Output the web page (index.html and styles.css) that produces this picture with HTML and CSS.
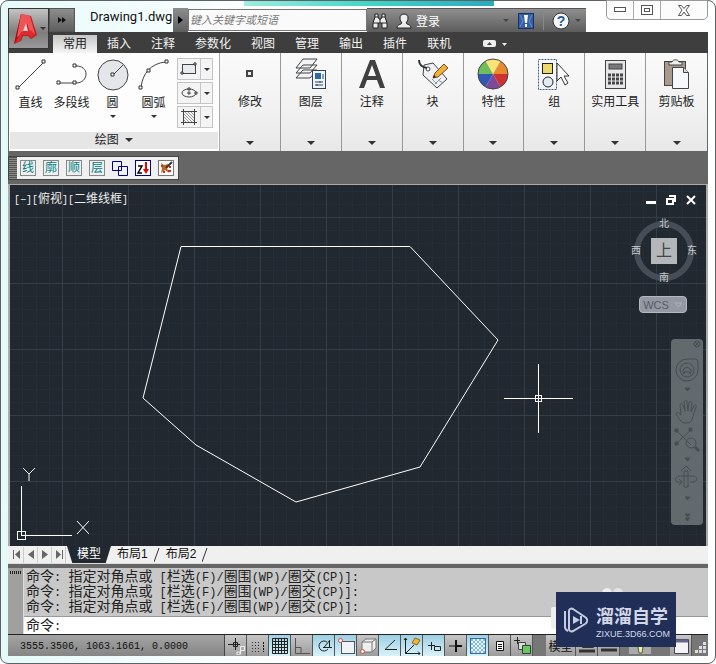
FILE: index.html
```html
<!DOCTYPE html>
<html lang="zh-CN">
<head>
    <meta charset="UTF-8">
    <meta name="viewport" content="width=device-width, initial-scale=1.0">
    <title>Drawing1.dwg</title>
    <link rel="stylesheet" href="styles.css">
</head>
<body>
    <div class="window">
        <!-- Title bar -->
        <header class="title-bar">
            <button class="quick-access" aria-label="快速访问"><svg width="8" height="6"><path d="M0 0l4 3-4 3zM4 0l4 3-4 3z" fill="#111"/></svg></button>
            <h1 class="title">Drawing1.dwg</h1>
            <button class="search-toggle" aria-label="搜索"><svg width="5" height="8"><path d="M0 0l5 4-5 4z" fill="#000"/></svg></button>
            <input class="search" type="text" placeholder="键入关键字或短语" aria-label="键入关键字或短语">
            <div class="info-bar">
                <button class="info-button" aria-label="查找">
                    <svg width="16" height="16" viewBox="0 0 16 16"><path d="M3 1h3v3l1 2h2l1-2V1h3v3l2 6v5h-5v-5H6v5H1v-5l2-6z" fill="#eee" stroke="#222"/><path d="M3 4h3M10 4h3M1 10h5M10 10h5M8 6v4" stroke="#222"/></svg>
                </button>
                <button class="info-button login">
                    <svg width="16" height="16" viewBox="0 0 16 16"><path d="M8 1c3 0 4 2 4 4s-1 4-2 5c1 2 5 1 5 5H1c0-4 4-3 5-5-1-1-2-3-2-5s1-4 4-4z" fill="#eee" stroke="#222"/></svg>
                    登录
                </button>
                <span class="caret caret-dim push"></span>
                <button class="info-button exchange" aria-label="Exchange">
                    <svg width="16" height="16" viewBox="0 0 16 16"><rect x=".5" y=".5" width="15" height="15" fill="#3560a8" stroke="#15306a"/><path d="M2 2l3 6-3 6M14 2l-3 6 3 6" fill="none" stroke="#6a90cc"/><path d="M6 2h4l-1 8H7zM7 11h2v3H7z" fill="#fff"/></svg>
                </button>
                <button class="info-button help" aria-label="帮助">
                    <svg width="18" height="18" viewBox="0 0 18 18"><circle cx="9" cy="9" r="8" fill="#f4f6fa" stroke="#333"/><text x="9" y="14" text-anchor="middle" class="help-mark">?</text></svg>
                </button>
                <span class="caret caret-dim"></span>
            </div>
            <div class="window-controls">
                <button aria-label="最小化"><svg width="12" height="6"><rect x=".5" y=".5" width="11" height="4" fill="#fff" stroke="#555"/></svg></button>
                <button aria-label="还原"><svg width="12" height="11"><rect x=".5" y=".5" width="11" height="9" fill="#fff" stroke="#555"/><rect x="3.500" y="3.500" width="5" height="3" fill="#fff" stroke="#555"/></svg></button>
                <button class="wide" aria-label="关闭"><svg width="12" height="11"><path d="M.5 .5h3l2.500 3 2.500-3h3L8 5l3.500 5.500h-3L6 7l-2.500 3.500h-3L4 5z" fill="#fff" stroke="#555"/></svg></button>
            </div>
            <button class="app-button" aria-label="应用程序菜单">
                <svg width="26" height="34" viewBox="0 0 26 34">
                    <path d="M8 2L18 4 24 23 18 27 15 24H10L8 29 1 32z" fill="#c91c20"/>
                    <path d="M8 2L7 20 1 32z" fill="#9c1418"/>
                    <path d="M8 2l9 2 5 18-4 2-4-13-5 11-5 3z" fill="#ee5456"/>
                    <path d="M8 20l9-2 5 4-4 4-2-3H9l-2 6-4 2z" fill="#dc2b2e"/>
                    <path d="M13 11l2 8h-5z" fill="#f4cfcf"/>
                </svg>
                <span class="caret"></span>
            </button>
        </header>

        <!-- Ribbon tabs -->
        <nav class="tabs">
            <button class="tab active">常用</button>
            <button class="tab">插入</button>
            <button class="tab">注释</button>
            <button class="tab">参数化</button>
            <button class="tab">视图</button>
            <button class="tab">管理</button>
            <button class="tab">输出</button>
            <button class="tab">插件</button>
            <button class="tab">联机</button>
            <button class="ribbon-toggle" aria-label="最小化功能区">
                <svg width="24" height="8"><rect width="13" height="7" rx="2" fill="#eee"/><path d="M4 5l2.500-3L9 5z" fill="#444"/><path d="M19 3h5l-2.500 3z" fill="#eee"/></svg>
            </button>
        </nav>

        <!-- Ribbon -->
        <section class="ribbon">
            <div class="draw-panel">
                <div class="draw-tools">
                    <button class="tool">
                        <svg width="34" height="34" viewBox="0 0 34 34"><path d="M4 30L30 4" class="pen"/><path d="M2 28h3v3H2zM28 2h3v3h-3z" class="node"/></svg>
                        <span>直线</span>
                    </button>
                    <button class="tool">
                        <svg width="34" height="34" viewBox="0 0 34 34"><path d="M3 25h18c6 0 10-4 10-9s-4-8-10-8" class="pen"/><path d="M2 23h3v3H2zM18 23h3v3h-3zM18 6h3v3h-3z" class="node"/></svg>
                        <span>多段线</span>
                    </button>
                    <button class="tool">
                        <svg width="34" height="34" viewBox="0 0 34 34"><circle cx="17" cy="17" r="15" fill="#e4e6ea" stroke="#444"/><path d="M17 17L27 7" class="pen"/><path d="M15 15h3v3h-3z" class="node"/></svg>
                        <span>圆</span>
                        <i class="caret"></i>
                    </button>
                    <button class="tool">
                        <svg width="34" height="34" viewBox="0 0 34 34"><path d="M4 30C5 16 14 5 29 4" class="pen"/><path d="M2 28h3v3H2zM10 11h3v3h-3zM28 2h3v3h-3z" class="node"/></svg>
                        <span>圆弧</span>
                        <i class="caret"></i>
                    </button>
                    <div class="small-tools">
                        <button class="small-tool" aria-label="矩形"><svg width="22" height="18" viewBox="0 0 22 18"><rect x="4.500" y="4.500" width="13" height="9" fill="#e8ebf0" stroke="#444"/><path d="M3 12h2v2H3zM16 3h2v2h-2z" class="node"/></svg><i class="caret"></i></button>
                        <button class="small-tool" aria-label="椭圆"><svg width="22" height="18" viewBox="0 0 22 18"><ellipse cx="11" cy="9" rx="7" ry="4" fill="none" stroke="#444"/><path d="M11 7v4M9 9h4" class="pen"/><path d="M10 4h2v2h-2zM17 8h2v2h-2z" class="node"/></svg><i class="caret"></i></button>
                        <button class="small-tool" aria-label="图案填充"><svg width="22" height="18" viewBox="0 0 22 18"><path d="M3 3.500h16M3 14.500h16M5.500 1v16M16.500 1v16" class="pen"/><path d="M6 12l2 2M6 9l5 5M6 6l8 8M7 4l9 9M10 4l6 6M13 4l3 3" stroke="#999" fill="none"/></svg><i class="caret"></i></button>
                    </div>
                </div>
                <button class="draw-title">绘图 <i class="caret"></i></button>
            </div>
            <button class="panel">
                <svg width="34" height="34" viewBox="0 0 34 34"><rect x="14" y="14" width="5" height="5" fill="#eee" stroke="#444" stroke-width="2"/></svg>
                <span>修改</span><i class="caret"></i>
            </button>
            <button class="panel">
                <svg width="34" height="34" viewBox="0 0 34 34">
                    <path d="M2 21l7-8h14l-7 8zM2 16l7-8h14l-7 8zM2 11l7-9h14l-7 9z" fill="#f2f4f8" stroke="#444"/>
                    <rect x="18.500" y="13.500" width="13" height="18" fill="#f0f4fa" stroke="#345"/>
                    <rect x="21" y="16" width="6" height="6" fill="#2e66a5"/><path d="M29 17v5M21 25h8M21 28h8M26 24v2M23 27v2" stroke="#345"/>
                </svg>
                <span>图层</span><i class="caret"></i>
            </button>
            <button class="panel">
                <svg width="34" height="34" viewBox="0 0 34 34"><path d="M15 3h5l10 28h-5l-3-8H12l-3 8H4zM17 8l-4 11h8z" fill="#404040" fill-rule="evenodd"/></svg>
                <span>注释</span><i class="caret"></i>
            </button>
            <button class="panel">
                <svg width="34" height="34" viewBox="0 0 34 34">
                    <path d="M8 8l9-2 14 16-10 9L7 18z" fill="#eef1f6" stroke="#444"/>
                    <circle cx="12" cy="12" r="2" fill="#fff" stroke="#444"/><path d="M11 11C5 10 3 7 3 3" fill="none" stroke="#333" stroke-width="2"/>
                    <path d="M16 22l5 5M19 27l6-6M22 23l5 3" stroke="#8b95a5"/>
                    <path d="M17 21l2-5L28 7l4 4-10 9z" fill="#f2af39" stroke="#76501c"/><path d="M17 21l1-3 2 2z" fill="#222"/>
                </svg>
                <span>块</span><i class="caret"></i>
            </button>
            <button class="panel">
                <svg width="34" height="34" viewBox="0 0 34 34">
                    <path d="M17 17L9.500 4A15 15 0 0 1 24.500 4z" fill="#f8e477"/>
                    <path d="M17 17L24.500 4A15 15 0 0 1 32 17z" fill="#e88a2e"/>
                    <path d="M17 17H32A15 15 0 0 1 24.500 30z" fill="#cf3030"/>
                    <path d="M17 17L24.500 30A15 15 0 0 1 9.500 30z" fill="#7e489b"/>
                    <path d="M17 17L9.500 30A15 15 0 0 1 2 17z" fill="#3059b5"/>
                    <path d="M17 17H2A15 15 0 0 1 9.500 4z" fill="#6fbd5b"/>
                    <circle cx="17" cy="17" r="15" fill="none" stroke="#444"/>
                </svg>
                <span>特性</span><i class="caret"></i>
            </button>
            <button class="panel">
                <svg width="34" height="34" viewBox="0 0 34 34">
                    <rect x="1.500" y="2.500" width="18" height="30" fill="none" stroke="#3563a0" stroke-dasharray="2 1"/>
                    <rect x="5.500" y="6.500" width="10" height="10" fill="#ecd96a" stroke="#222"/>
                    <circle cx="11" cy="25" r="5" fill="#e2ecf6" stroke="#222"/>
                    <path d="M20 6v18l4-4 4 8 3-2-4-7h5z" fill="#fff" stroke="#333"/>
                </svg>
                <span>组</span><i class="caret"></i>
            </button>
            <button class="panel">
                <svg width="34" height="34" viewBox="0 0 34 34">
                    <rect x="7.500" y="3.500" width="20" height="28" fill="#e6e7e9" stroke="#444"/>
                    <rect x="11" y="7" width="13" height="5" fill="#777" stroke="#444"/>
                    <path d="M10 18h15M10 22h15M10 26h15" stroke="#444" stroke-width="3" stroke-dasharray="3 1"/>
                </svg>
                <span>实用工具</span><i class="caret"></i>
            </button>
            <button class="panel">
                <svg width="34" height="34" viewBox="0 0 34 34">
                    <rect x="4.500" y="4.500" width="21" height="24" fill="#a89a8c" stroke="#444"/>
                    <path d="M9 5h3c1-3 6-3 7 0h3v3H9z" fill="#eee" stroke="#444"/>
                    <path d="M12.500 10.500h11l5 5v16h-16z" fill="#f7f8fb" stroke="#444"/><path d="M23.500 10.500v5h5" fill="#ddd" stroke="#444"/>
                </svg>
                <span>剪贴板</span><i class="caret"></i>
            </button>
        </section>

        <!-- Floating toolbar -->
        <div class="toolbar-row">
            <div class="toolbar">
                <span class="grip"></span>
                <button class="glyph">线</button>
                <button class="glyph">廓</button>
                <button class="glyph">顺</button>
                <button class="glyph">层</button>
                <button class="glyph-icon" aria-label="复制"><svg width="16" height="16"><path d="M.5 1.500h9v9h-9zM6.500 6.500h9v9h-9z" fill="none" stroke="#00008b"/></svg></button>
                <button class="glyph-icon" aria-label="Z 轴归零"><svg width="16" height="16"><rect x=".5" y=".5" width="15" height="15" fill="#fff" stroke="#00008b"/><path d="M3 6h4l-4 7h4" fill="none" stroke="#000" stroke-width="1.500"/><path d="M11 2v8" stroke="#e00" stroke-width="2"/><path d="M8 9h6l-3 5z" fill="#e00"/></svg></button>
                <button class="glyph-icon" aria-label="清理"><svg width="16" height="16"><rect x=".5" y=".5" width="15" height="15" fill="#fff" stroke="#777"/><path d="M3 3l3 2 4-1-1 4 2 5-4-3-4 3 1-4z" fill="#b96a23"/><path d="M14 2L8 8" stroke="#333" stroke-width="2"/><path d="M3 6h2M10 11h3M5 12h2M11 7h2" stroke="#d22" stroke-width="2"/></svg></button>
            </div>
        </div>

        <!-- Drawing area -->
        <main class="canvas">
            <svg class="drawing" width="100%" height="100%">
                <defs>
                    <pattern id="grid" x="52" y="32" width="66" height="66" patternUnits="userSpaceOnUse">
                        <path d="M13.500 0v66M26.500 0v66M40.500 0v66M53.500 0v66M0 13.500h66M0 26.500h66M0 40.500h66M0 53.500h66" stroke="#252d36"/>
                        <path d="M.5 0v66M0 .5h66" stroke="#353d46"/>
                    </pattern>
                </defs>
                <rect width="100%" height="100%" fill="url(#grid)"/>
                <path d="M171 61.500H400L488 155 410 282 286 317 186 260 133 213z" class="outline"/>
                <path d="M494 213.500h69M528.500 179v69M525.500 210.500h6v6h-6z" class="cross"/>
            </svg>
            <div class="view-label"><code>[&minus;][</code>俯视<code>][</code>二维线框<code>]</code></div>
            <svg class="ucs" width="84" height="82"><path d="M11.500 22v50M11 71.500h51M7.500 67.500h8v8h-8z" class="cross"/><path d="M13 4l6 6 6-6M19 10v7M67 57l12 13M79 57L67 70" class="outline"/></svg>
            <div class="view-controls">
                <button aria-label="最小化视口"><svg width="10" height="10"><path d="M0 6h10v3H0z" fill="#fff"/></svg></button>
                <button aria-label="还原视口"><svg width="10" height="10"><path d="M1 4h6v5H1zM3 1h6v6" fill="none" stroke="#fff" stroke-width="2"/></svg></button>
                <button aria-label="关闭视口"><svg width="10" height="10"><path d="M1 1l8 8M9 1L1 9" stroke="#fff" stroke-width="2"/></svg></button>
            </div>
            <div class="compass">
                <span class="north">北</span>
                <span class="west">西</span>
                <button class="cube">上</button>
                <span class="east">东</span>
                <span class="south">南</span>
            </div>
            <button class="wcs">WCS <svg width="9" height="6"><path d="M1 1h7L4.500 5z" fill="none" stroke="#aeb2bd"/></svg></button>
            <div class="nav-bar">
                <svg width="32" height="186" viewBox="0 0 32 186" fill="none" stroke="#464e54">
                    <circle cx="26" cy="5" r="3"/><path d="M24 3l4 4M28 3l-4 4"/>
                    <path d="M16 20h8q3 0 3 3v8a11 11 0 1 1-11-11z"/><circle cx="16" cy="31" r="7"/><path d="M13 35a4 4 0 1 1 6 0v-2h-6z"/>
                    <path d="M14 49h5l-2.500 3z" fill="#464e54"/>
                    <path d="M5 75c0-2 3-2 5 1l-1-10c0-2 2-2 3 0l2 6-1-9c0-2 3-2 3 0l1 9 1-8c0-2 3-2 3 0l-1 9 3-6c1-2 3-1 2 1l-3 9c-1 6-3 7-7 7-5 0-6-3-10-9z"/>
                    <path d="M6 92l14 14M20 91L6 104"/><path d="M4 90h3v3H4zM18 89h3v3h-3zM4 103h3v3H4z" fill="#464e54"/><circle cx="20" cy="104" r="5"/><path d="M24 108l4 4" stroke-width="3"/>
                    <path d="M14 119h5l-2.500 3zM14 158h5l-2.500 3zM14 175h5l-2.500 3zM14 179h5l-2.500 3z" fill="#464e54"/>
                    <path d="M13 148v-16h4v16zM10 132l5-5 5 5M11 143H6c-3-2-1-6 3-6h13c5 0 5 6 0 6h-3M8 140l3 3-3 3"/>
                </svg>
            </div>
        </main>

        <!-- Layout tabs -->
        <div class="layout-tabs">
            <button class="step" aria-label="第一个"><svg width="10" height="9"><path d="M1.500 0v9" stroke="#666"/><path d="M8 0v9L3 4.500z" fill="#666"/></svg></button>
            <button class="step" aria-label="上一个"><svg width="6" height="9"><path d="M6 0v9L0 4.500z" fill="#666"/></svg></button>
            <button class="step" aria-label="下一个"><svg width="6" height="9"><path d="M0 0v9l6-4.500z" fill="#666"/></svg></button>
            <button class="step" aria-label="最后一个"><svg width="10" height="9"><path d="M8.500 0v9" stroke="#666"/><path d="M2 0v9l5-4.500z" fill="#666"/></svg></button>
            <button class="layout current">模型</button>
            <button class="layout">布局1</button>
            <svg width="6" height="14"><path d="M0 14L5 0" stroke="#333"/></svg>
            <button class="layout">布局2</button>
            <svg width="6" height="14"><path d="M0 14L5 0" stroke="#333"/></svg>
        </div>

        <!-- Command line -->
        <section class="command">
            <div class="command-grip"></div>
            <div class="command-body">
                <div class="history">
                    <p>命令<code>: </code>指定对角点或<code> [</code>栏选<code>(F)/</code>圈围<code>(WP)/</code>圈交<code>(CP)]:</code></p>
                    <p>命令<code>: </code>指定对角点或<code> [</code>栏选<code>(F)/</code>圈围<code>(WP)/</code>圈交<code>(CP)]:</code></p>
                    <p>命令<code>: </code>指定对角点或<code> [</code>栏选<code>(F)/</code>圈围<code>(WP)/</code>圈交<code>(CP)]:</code></p>
                </div>
                <div class="prompt">
                    <label for="commandInput">命令<code>:</code></label>
                    <input id="commandInput" type="text">
                </div>
            </div>
        </section>

        <!-- Status bar -->
        <footer class="status">
            <div class="coords">3555.3506, 1063.1661, 0.0000</div>
            <button class="mode" aria-label="推断约束"><svg width="18" height="18"><path d="M8.500 1v12M1 7.500h12" class="ink"/><path d="M6.500 5.500h4v4h-4z" class="ink"/><path d="M13.500 17V9.500h4v4h-4M10 15h3v3h-3z" stroke="#eee" fill="none"/></svg></button>
            <button class="mode" aria-label="捕捉"><svg width="18" height="18"><path d="M3 5.500h9M3 8.500h9M3 11.500h9M3 14.500h9" stroke="#333" stroke-dasharray="1 2"/><path d="M14.500 5v10" stroke="#111" stroke-dasharray="2 1"/></svg></button>
            <button class="mode on" aria-label="栅格"><svg width="18" height="18"><path d="M1.500 1.500h15v15h-15zM4.500 1v16M7.500 1v16M10.500 1v16M13.500 1v16M1 4.500h16M1 7.500h16M1 10.500h16M1 13.500h16" class="ink"/></svg></button>
            <button class="mode" aria-label="正交"><svg width="18" height="18"><path d="M2.500 1v15.500H17M2 10.500h6v6" stroke="#555" fill="none"/></svg></button>
            <button class="mode on" aria-label="极轴"><svg width="18" height="18"><path d="M12 5A5 5 0 1 0 13 12M8.500 11L15 3M8 10.500h9M14.500 4v6" class="ink"/></svg></button>
            <button class="mode on" aria-label="对象捕捉"><svg width="18" height="18"><rect x="4.500" y="4.500" width="13" height="12" fill="#eef4f8" stroke="#555"/><circle cx="3.500" cy="3.500" r="2" fill="#fff" stroke="#d43"/></svg></button>
            <button class="mode" aria-label="三维对象捕捉"><svg width="18" height="18"><path d="M3 5l4-3h10v9l-4 4H3zM3 5h10v10M13 5l4-3" fill="#eee" stroke="#777"/><circle cx="3.500" cy="14.500" r="2" fill="#fff" stroke="#d43"/></svg></button>
            <button class="mode on" aria-label="对象追踪"><svg width="18" height="18"><path d="M14 3L4 12.500h12" class="ink"/></svg></button>
            <button class="mode on" aria-label="动态 UCS"><svg width="18" height="18"><path d="M2.500 1v15.500H17M2.500 16.500L11 8M1 3l1.500-2L4 3M15 14.500l2 2-2 2" class="ink"/><path d="M9 6l3-5 5 2-3 5z" fill="#f1b535" stroke="#8b681c"/></svg></button>
            <button class="mode on" aria-label="动态输入"><svg width="18" height="18"><path d="M3 8.500h7M6.500 5v8M9.500 9.500h6v4h-6z" class="ink"/></svg></button>
            <button class="mode" aria-label="线宽"><svg width="18" height="18"><path d="M2 9h8" stroke="#111"/><path d="M10 9h5M9 3v12" stroke="#111" stroke-width="2"/></svg></button>
            <button class="mode on" aria-label="透明度"><svg width="18" height="18"><defs><pattern id="check" width="4" height="4" patternUnits="userSpaceOnUse"><path d="M0 0h2v2H0zM2 2h2v2H2z" fill="#8ab9df"/></pattern></defs><rect x="1.500" y="1.500" width="15" height="15" fill="#e6f4fc"/><rect x="1.500" y="1.500" width="15" height="15" fill="url(#check)" stroke="#336da8"/></svg></button>
            <button class="mode" aria-label="快捷特性"><svg width="18" height="18"><path d="M5.500 4.500h7v9h-7z" fill="#fff" stroke="#111"/><path d="M7 7.500h4M7 9.500h4M7 11.500h4" stroke="#111"/></svg></button>
            <button class="mode" aria-label="选择循环"><svg width="18" height="18"><path d="M1 3.500h6M4.500 0v7" class="ink"/><path d="M5.500 5.500h7v7h-7z" fill="#ddd" stroke="#444"/><path d="M9.500 8.500h8v8h-8z" fill="#6fc65a" stroke="#244"/></svg></button>
            <div class="status-gap"></div>
            <button class="space">模型</button>
            <button class="mode" aria-label="布局"><svg width="18" height="18"><path d="M4.500 3.500h11v7h-11z" fill="#fff" stroke="#333"/><path d="M1 14h16" stroke="#333" stroke-width="3"/></svg></button>
            <button class="mode" aria-label="快速查看"><svg width="18" height="18"><path d="M1 13h16" stroke="#333" stroke-width="3"/></svg></button>
            <div class="status-gap wide-gap"><svg width="24" height="18"><path d="M1 3h22v14H1z" fill="#aaa"/><path d="M10 5h5v5l-1 6h-3l-1-6z" fill="#eef0a0" stroke="#555"/></svg><i class="caret"></i></div>
            <button class="mode" aria-label="全屏显示"><svg width="18" height="18"><path d="M2.500 2.500h14v14h-14z" fill="#f4f4f8" stroke="#445"/><path d="M2 4h14" stroke="#668" stroke-width="3"/></svg></button>
            <div class="resize"><svg width="12" height="12"><path d="M9 0h3v3H9zM5 4h3v3H5zM9 4h3v3H9zM1 8h3v3H1zM5 8h3v3H5zM9 8h3v3H9z" fill="#ddd"/></svg></div>
        </footer>
    </div>

    <!-- Site badge -->
    <svg class="badge-shade" width="75" height="42"><path d="M2 19h10v22H2q-2 0-2-2V21q0-2 2-2z" fill="#eee"/><circle cx="56" cy="5" r="5" fill="#eee"/><circle cx="67" cy="5" r="5" fill="#e4e4e4"/></svg>
    <div class="badge">
        <svg width="24" height="26" viewBox="0 0 24 26" fill="none" stroke="#c5cbe0" stroke-width="2"><path d="M5 4c0-2 2-3 4-2l12 8c3 2 3 5 0 7L9 24c-2 1-4 0-4-2z"/><path d="M1 4v16c0 2 1 3 3 4"/><path d="M9 9l7 4-7 4z" fill="#c5cbe0" stroke="none"/><path d="M17 9v8"/></svg>
        <div>
            <div class="badge-name">溜溜自学</div>
            <div class="badge-site">ZIXUE.3D66.COM</div>
        </div>
    </div>
</body>
</html>
```
FILE: styles.css
```css
* {
    box-sizing: border-box;
}

body {
    margin: 0;
    font-family: "Liberation Sans", "Noto Sans CJK SC", sans-serif;
    font-size: 12px;
    color: #222;
    background: #fff;
}

button {
    margin: 0;
    padding: 0;
    border: none;
    background: none;
    color: inherit;
    font: inherit;
    cursor: pointer;
}

svg {
    display: block;
    flex: none;
}

.window {
    position: relative;
    display: flex;
    flex-direction: column;
    min-height: 100vh;
    padding: 7px;
    border: 1px solid #5c6266;
    border-radius: 8px;
    background: linear-gradient(90deg, #e6fafa, #fff 40%);
}

.window::before {
    content: "";
    position: absolute;
    top: 0;
    left: 34%;
    width: 35%;
    height: 5px;
    background: linear-gradient(90deg, #9eecdf, #41d5c8 50%, #2aa9bd);
}

.caret {
    display: inline-block;
    border: 3px solid transparent;
    border-top-color: #333;
    border-bottom: none;
}

.caret-dim {
    border-top-color: #444;
}

/* Title bar */
.title-bar {
    position: relative;
    display: flex;
    height: 24px;
    padding-left: 41px;
}

.quick-access {
    display: flex;
    align-items: center;
    justify-content: center;
    width: 26px;
    background: linear-gradient(#8d8d8d, #5f5f5f);
    border: 1px solid #555;
}

.title {
    margin: 0;
    padding-left: 15px;
    width: 98px;
    font-family: Roboto, sans-serif;
    font-size: 13px;
    font-weight: normal;
    line-height: 17px;
    color: #111;
    white-space: nowrap;
}

.search-toggle {
    display: flex;
    align-items: center;
    justify-content: center;
    width: 15px;
    background: linear-gradient(#8d8d8d, #5f5f5f);
}

.search {
    width: 179px;
    height: 22px;
    margin: 1px 0;
    padding: 2px 1px;
    border: 1px solid #777;
    background: #fafafa;
    font: italic 11px "Liberation Sans", "Noto Sans CJK SC", sans-serif;
}

.search::placeholder {
    color: #777;
}

.info-bar {
    display: flex;
    align-items: center;
    gap: 5px;
    width: 219px;
    padding: 0 5px;
    border-top: 1px solid #555;
    background: linear-gradient(#8f8f8f, #5c5c5c);
}

.info-button {
    display: flex;
    align-items: center;
    gap: 4px;
}

.login {
    margin-left: 3px;
    color: #fff;
}

.push {
    margin-left: auto;
}

.exchange {
    margin-left: 4px;
}

.help {
    margin-left: 4px;
    padding-left: 8px;
    border-left: 1px solid #888;
}

.help-mark {
    font: bold 14px "Liberation Sans", sans-serif;
    fill: #2856a0;
}

.window-controls {
    position: absolute;
    top: -8px;
    right: 0;
    display: flex;
    height: 20px;
    border: 1px solid #999;
    border-radius: 0 0 5px 5px;
    background: #fcfcfc;
}

.window-controls button {
    display: flex;
    align-items: center;
    justify-content: center;
    width: 27px;
    border-right: 1px solid #aaa;
}

.window-controls .wide {
    width: 46px;
    border-right: none;
}

.app-button {
    position: absolute;
    top: 0;
    left: 0;
    z-index: 1;
    display: flex;
    align-items: center;
    gap: 1px;
    width: 41px;
    height: 41px;
    padding-left: 4px;
    border: 1px solid #333;
    background: linear-gradient(#c4c4c4, #7d7d7d 60%, #999);
}

/* Ribbon */
.tabs {
    display: flex;
    align-items: stretch;
    height: 21px;
    padding: 3px 0 0 45px;
    background: #3e3e3e;
}

.tab {
    padding: 0 10px;
    line-height: 18px;
    color: #f2f2f2;
}

.tab.active {
    background: linear-gradient(#c6c6c6, #f5f5f5);
    color: #222;
}

.ribbon-toggle {
    margin-left: 22px;
}

.ribbon {
    display: grid;
    grid-template-columns: 211px repeat(8, 1fr);
    border: 1px solid #666;
    border-width: 0 1px;
    background: #f6f6f6;
}

.draw-panel {
    display: flex;
    flex-direction: column;
    justify-content: space-between;
    height: 98px;
    padding: 2px 1px;
    border-right: 1px solid #aaa;
    background: #fdfdfd;
}

.draw-tools {
    display: flex;
    height: 76px;
}

.tool {
    display: flex;
    flex-direction: column;
    align-items: center;
    width: 41px;
    padding-top: 3px;
}

.tool span,
.panel span {
    padding-top: 2px;
    line-height: 18px;
    white-space: nowrap;
}

.tool .caret {
    margin-top: 3px;
}

.pen {
    fill: none;
    stroke: #444;
}

.node {
    fill: #fff;
    stroke: #333;
}

.small-tools {
    display: flex;
    flex-direction: column;
    gap: 2px;
    padding: 3px 0 0 3px;
}

.small-tool {
    display: flex;
    align-items: center;
    width: 36px;
    height: 22px;
    border: 1px solid #c4c4c4;
    background: linear-gradient(90deg, #f4f4f4 22px, #c4c4c4 22px, #c4c4c4 23px, #f4f4f4 23px);
}

.small-tool .caret {
    margin-left: 4px;
}

.draw-title {
    height: 17px;
    line-height: 17px;
    background: #e6e6e6;
}

.draw-title .caret {
    margin: 0 0 2px 3px;
    border-width: 4px;
    border-bottom: none;
}

.panel {
    display: flex;
    flex-direction: column;
    align-items: center;
    height: 98px;
    padding: 4px 0;
    border-right: 1px solid #999;
    background: linear-gradient(#fafafa, #f1f1f1 60%, #e8e8e8);
}

.panel:last-child {
    border-right: none;
}

.panel .caret {
    margin: auto 0 2px;
    border-width: 4px;
    border-bottom: none;
}

/* Floating toolbar */
.toolbar-row {
    display: flex;
    height: 33px;
    padding-top: 5px;
    background: #666;
}

.toolbar {
    display: flex;
    align-items: center;
    gap: 7px;
    height: 24px;
    padding-right: 4px;
    border: 1px solid #444;
    background: #f0f0f0;
}

.grip {
    width: 8px;
    height: 22px;
    margin-right: -4px;
    background: repeating-linear-gradient(#555 0 1px, #888 1px 2px);
}

.glyph {
    width: 16px;
    height: 16px;
    border: 1px solid #888;
    line-height: 14px;
    color: #008080;
}

/* Drawing area */
.canvas {
    position: relative;
    flex: 1;
    min-height: 350px;
    border: 1px solid #aaa;
    border-width: 1px 2px 0;
    background: #212830;
    overflow: hidden;
}

.drawing {
    position: absolute;
    inset: 0;
}

.outline {
    fill: none;
    stroke: #fff;
}

.cross {
    fill: none;
    stroke: #fff;
    shape-rendering: crispEdges;
}

.view-label {
    position: absolute;
    top: 5px;
    left: 4px;
    line-height: 18px;
    color: #eee;
}

.view-label code {
    font-family: "Liberation Mono", monospace;
    font-size: 10px;
}

.ucs {
    position: absolute;
    left: 0;
    bottom: 0;
}

.view-controls {
    position: absolute;
    top: 10px;
    right: 10px;
    display: flex;
    gap: 10px;
}

.compass {
    position: absolute;
    top: 36px;
    right: 12px;
    display: grid;
    place-items: center;
    width: 60px;
    height: 60px;
    border: 6px solid #464d57;
    border-radius: 50%;
    font-size: 10px;
    line-height: 12px;
    color: #c8cbd0;
}

.cube {
    width: 26px;
    height: 26px;
    background: #b4b7ba;
    color: #444;
    font-size: 16px;
    line-height: 24px;
}

.compass span {
    position: absolute;
}

.north {
    top: -9px;
}

.south {
    bottom: -9px;
}

.west {
    left: -9px;
}

.east {
    right: -9px;
}

.wcs {
    position: absolute;
    top: 111px;
    right: 19px;
    display: flex;
    align-items: center;
    justify-content: center;
    gap: 5px;
    width: 48px;
    height: 17px;
    border: 1px solid #b4b8c2;
    border-radius: 4px;
    background: #9498a3;
    font-size: 11px;
    color: #555b68;
}

.nav-bar {
    position: absolute;
    top: 154px;
    right: 3px;
    border-radius: 4px;
    background: #636a6e;
}

/* Layout tabs */
.layout-tabs {
    display: flex;
    align-items: center;
    height: 18px;
    padding-left: 2px;
    border-bottom: 1px solid #ddd;
    background: #f0f0f0;
}

.step {
    display: flex;
    align-items: center;
    justify-content: center;
    width: 14px;
    height: 16px;
    border-right: 1px solid #ccc;
}

.layout {
    padding: 0 6px;
    line-height: 17px;
    color: #111;
}

.layout.current {
    margin-left: 1px;
    padding: 0 10px;
    background: #212830;
    color: #fff;
    clip-path: polygon(0 0, 100% 0, 88% 100%, 12% 100%);
}

/* Command line */
.command {
    display: flex;
    border-top: 4px solid #666;
    border-bottom: 1px solid #222;
    background: #c8c8c8;
}

.command-grip {
    width: 16px;
    border-right: 1px solid #ddd;
    background: repeating-linear-gradient(90deg, #222 0 1px, transparent 1px 2px) 2px 3px / 12px 3px no-repeat #a0a0a0;
}

.command-body {
    flex: 1;
    font-size: 14px;
    color: #222;
}

.command p {
    height: 15px;
    margin: 0;
    padding-left: 2px;
    line-height: 15px;
    white-space: pre;
}

.command code {
    font-family: "Liberation Mono", monospace;
    font-size: 12px;
}

.history {
    padding: 1px 0 2px;
    border-bottom: 1px solid #999;
}

.prompt {
    display: flex;
    height: 17px;
    padding-left: 2px;
    line-height: 17px;
    background: #fff;
}

.prompt input {
    flex: 1;
    height: 17px;
    padding: 0 4px;
    border: none;
    outline: none;
    background: transparent;
}

/* Status bar */
.status {
    display: flex;
    height: 21px;
    background: #8a8a8a;
}

.coords {
    width: 217px;
    padding-left: 12px;
    border-right: 1px solid #444;
    background: linear-gradient(#a4a4a4, #858585);
    font: 10px/24px "Liberation Mono", monospace;
    color: #111;
    white-space: nowrap;
}

.mode {
    display: flex;
    align-items: center;
    justify-content: center;
    width: 22px;
    border-right: 1px solid #555;
    background: linear-gradient(#c6c6c6, #9c9c9c);
}

.mode.on {
    background: linear-gradient(#9ecfe3, #d8f2fa);
}

.ink {
    fill: none;
    stroke: #222;
}

.status-gap {
    width: 13px;
    background: #777;
}

.space {
    width: 30px;
    background: linear-gradient(#c6c6c6, #9c9c9c);
    color: #111;
    border-right: 1px solid #555;
}

.wide-gap {
    display: flex;
    flex: 1;
    align-items: center;
    justify-content: flex-end;
    gap: 6px;
    padding-right: 6px;
}

.resize {
    display: flex;
    align-items: flex-end;
    width: 16px;
    padding: 2px;
    background: #777;
}

/* Site badge */
.badge {
    position: absolute;
    right: 40px;
    bottom: 17px;
    display: flex;
    align-items: center;
    gap: 8px;
    width: 120px;
    height: 55px;
    padding-left: 8px;
    background: #212f58;
    color: #d2d7e8;
}

.badge-shade {
    position: absolute;
    right: 90px;
    bottom: 34px;
}

.badge-name {
    font: bold 18px/28px "Noto Sans CJK SC", sans-serif;
}

.badge-site {
    font-size: 9px;
    line-height: 10px;
    white-space: nowrap;
}
```
